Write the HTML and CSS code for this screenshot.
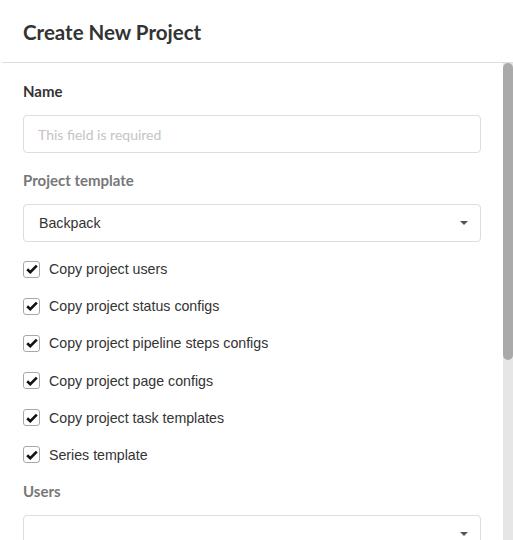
FILE: index.html
```html
<!DOCTYPE html>
<html>
<head>
<meta charset="utf-8">
<link rel="stylesheet" href="styles.css">
</head>
<body>
<div class="modal">
  <div class="modal-header">
    <h1 class="title">Create New Project</h1>
  </div>
  <div class="modal-body">
    <div class="field">
      <label class="label label-strong">Name</label>
      <div class="input"><span class="placeholder">This field is required</span></div>
    </div>
    <div class="field">
      <label class="label">Project template</label>
      <div class="input select"><span class="value">Backpack</span><span class="caret"></span></div>
    </div>
    <div class="checks">
      <div class="check"><span class="box"><svg viewBox="0 0 12 10" width="12" height="10"><path d="M1.2 5.2 L4.3 8.2 L10.8 1.6" fill="none" stroke="#111" stroke-width="2.6"/></svg></span><span class="check-label">Copy project users</span></div>
      <div class="check"><span class="box"><svg viewBox="0 0 12 10" width="12" height="10"><path d="M1.2 5.2 L4.3 8.2 L10.8 1.6" fill="none" stroke="#111" stroke-width="2.6"/></svg></span><span class="check-label">Copy project status configs</span></div>
      <div class="check"><span class="box"><svg viewBox="0 0 12 10" width="12" height="10"><path d="M1.2 5.2 L4.3 8.2 L10.8 1.6" fill="none" stroke="#111" stroke-width="2.6"/></svg></span><span class="check-label">Copy project pipeline steps configs</span></div>
      <div class="check"><span class="box"><svg viewBox="0 0 12 10" width="12" height="10"><path d="M1.2 5.2 L4.3 8.2 L10.8 1.6" fill="none" stroke="#111" stroke-width="2.6"/></svg></span><span class="check-label">Copy project page configs</span></div>
      <div class="check"><span class="box"><svg viewBox="0 0 12 10" width="12" height="10"><path d="M1.2 5.2 L4.3 8.2 L10.8 1.6" fill="none" stroke="#111" stroke-width="2.6"/></svg></span><span class="check-label">Copy project task templates</span></div>
      <div class="check"><span class="box"><svg viewBox="0 0 12 10" width="12" height="10"><path d="M1.2 5.2 L4.3 8.2 L10.8 1.6" fill="none" stroke="#111" stroke-width="2.6"/></svg></span><span class="check-label">Series template</span></div>
    </div>
    <div class="field">
      <label class="label">Users</label>
      <div class="input select"><span class="value"></span><span class="caret"></span></div>
    </div>
  </div>
  <div class="scrollbar"><div class="thumb"></div></div>
</div>
</body>
</html>
```

FILE: styles.css
```css
html, body {
  margin: 0;
  padding: 0;
  background: #fff;
}

.modal {
  position: relative;
  width: 513px;
  height: 540px;
  display: flex;
  flex-direction: column;
  background: #fff;
  overflow: hidden;
}

.modal-header {
  height: 62px;
  flex: none;
  display: flex;
  align-items: center;
  border-bottom: 1px solid #dedede;
  margin-left: 2px;
  padding-left: 21px;
}

.title {
  margin: 0;
  font-family: Lato, "Liberation Sans", sans-serif;
  font-weight: 700;
  font-size: 20.5px;
  color: #333;
  line-height: 24px;
  padding-top: 1px;
}

.modal-body {
  flex: 1;
  overflow: hidden;
  padding: 18px 32px 0 23px;
}

.scrollbar {
  position: absolute;
  right: 0;
  top: 63px;
  bottom: 0;
  width: 10px;
  background: #e6e6e6;
}

.thumb {
  height: 297px;
  background: #aaaaaa;
  border-radius: 5px;
}

.field {
  display: flex;
  flex-direction: column;
  gap: 14px;
  margin-bottom: 17px;
}

.label {
  font-family: Lato, "Liberation Sans", sans-serif;
  font-weight: 700;
  font-size: 15px;
  line-height: 20px;
  height: 20px;
  color: #777;
}

.label-strong {
  color: #333;
}

.input {
  height: 36px;
  border: 1px solid #dddddd;
  border-radius: 4px;
  display: flex;
  align-items: center;
  padding: 0 15px 0 14px;
  background: #fff;
}

.placeholder {
  font-family: Lato, "Liberation Sans", sans-serif;
  font-size: 14px;
  color: #c4c4c4;
}

.select {
  justify-content: space-between;
  padding-left: 15px;
}

.value {
  font-family: "Liberation Sans", Arial, sans-serif;
  font-size: 14.2px;
  color: #333;
}

.caret {
  width: 0;
  height: 0;
  border-left: 4px solid transparent;
  border-right: 4px solid transparent;
  border-top: 4px solid #555;
  margin-right: -3px;
}

.checks {
  display: grid;
  grid-auto-rows: 20px;
  row-gap: 17.2px;
  margin-top: 4px;
  margin-bottom: 16px;
}

.check {
  display: flex;
  align-items: center;
  gap: 9px;
}

.box {
  width: 15px;
  height: 15px;
  border: 1px solid #a8a8a8;
  border-radius: 3px;
  display: flex;
  align-items: center;
  justify-content: center;
  background: #fff;
}

.check-label {
  font-family: "Liberation Sans", Arial, sans-serif;
  font-size: 14.2px;
  color: #333;
}
```
